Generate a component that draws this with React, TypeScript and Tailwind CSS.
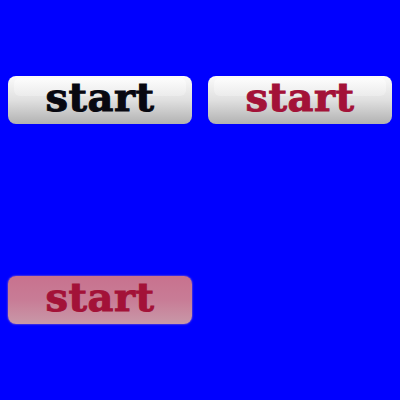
const font = { fontFamily: '"DejaVu Serif", "Liberation Serif", serif' }

function GlossButton({ textClass }: { textClass: string }) {
  return (
    <button
      className="relative w-[184px] h-[48px] rounded-[8px] bg-gradient-to-b from-[#fbfbfb] via-[#e0e0e0] to-[#b2b2b2] flex items-center justify-center"
    >
      <span className="absolute inset-x-[6px] top-[2px] h-[18px] rounded-[6px] bg-gradient-to-b from-white to-[#eeeeee] opacity-70" />
      <span className={`relative mb-[6px] text-[40px] leading-none font-bold tracking-[0.5px] ${textClass}`} style={font}>
        start
      </span>
    </button>
  )
}

export default function App() {
  return (
    <div className="w-[400px] h-[400px] bg-[#0000ff] grid grid-cols-2 grid-rows-2">
      <div className="flex items-center justify-center">
        <GlossButton textClass="text-[#080810] [-webkit-text-stroke:1px_#080810]" />
      </div>
      <div className="flex items-center justify-center">
        <GlossButton textClass="text-[#a31238] [-webkit-text-stroke:1px_#a31238]" />
      </div>
      <div className="flex items-center justify-center">
        <button className="w-[184px] h-[48px] rounded-[8px] bg-gradient-to-b from-[#c8728e] via-[#c87c96] to-[#c898a8] shadow-[0_0_2px_#c890a4] flex items-center justify-center">
          <span className="mb-[6px] text-[40px] leading-none font-bold tracking-[0.5px] text-[#a31238] [-webkit-text-stroke:1px_#a31238]" style={font}>
            start
          </span>
        </button>
      </div>
      <div />
    </div>
  )
}
